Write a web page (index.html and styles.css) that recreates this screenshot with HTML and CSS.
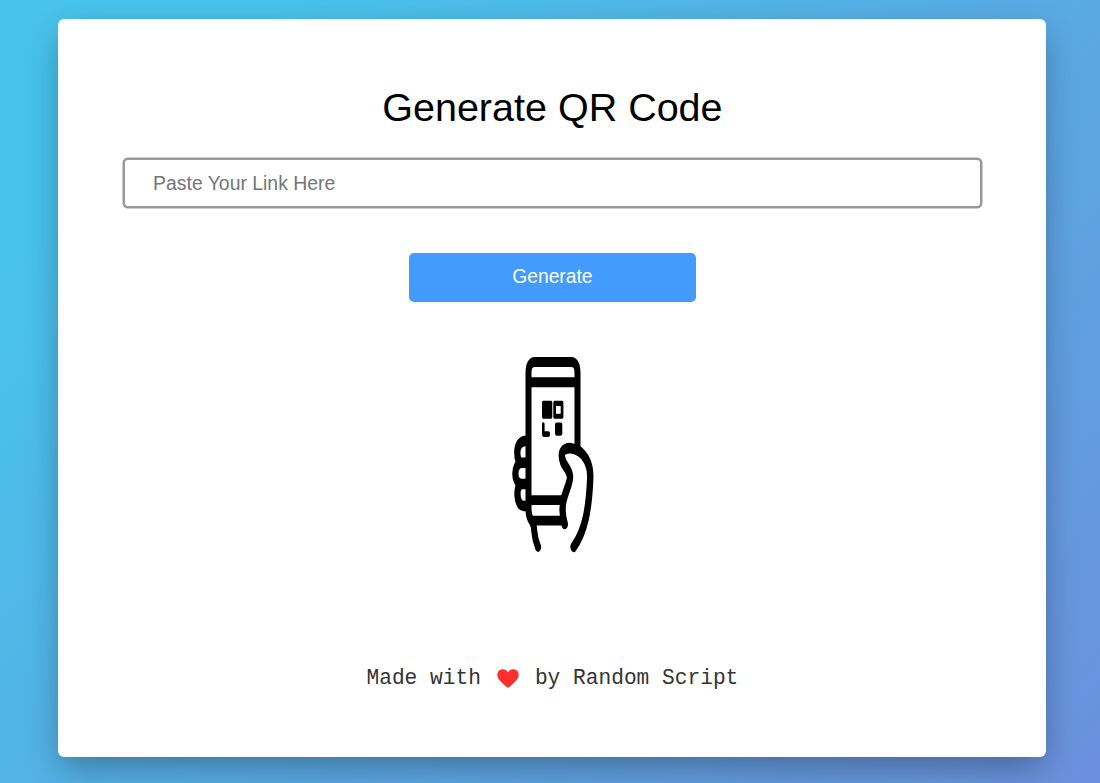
FILE: index.html
```html
<!DOCTYPE html>
<html lang="en">
<head>
<meta charset="utf-8">
<title>QR Code Generator</title>
<link rel="stylesheet" href="styles.css">
</head>
<body>
<main class="card">
  <h1 class="title">Generate QR Code</h1>
  <input class="link-input" type="text" placeholder="Paste Your Link Here">
  <button class="generate" type="button">Generate</button>
  <svg class="phone" viewBox="0 0 100 127.27" preserveAspectRatio="none" aria-hidden="true">
    <g fill="none" stroke="#000" stroke-width="6" stroke-linecap="round" stroke-linejoin="round">
      <path d="M72.5 59V14Q72.5 7.3 66 7.3H30Q23.5 7.3 23.5 14V97Q23.5 101 27 104Q29 106 29.3 110Q30 115 33 119.3"/>
      <path d="M24 19.5H72M25 91H58M28 103.4H58" stroke-linecap="butt"/>
      <path d="M22 55C15 55 12.3 58 12.3 62Q12.3 67.5 16 68.3H22M16 68.3C8.5 70 8.5 80 16 81.2H22M16 81.2C10.5 83 11.5 94.5 18.5 94.5H22" stroke-width="6.3"/>
      <path d="M59.7 105.5C57 100 57 94 59 90C61 85 65.5 80 65 76.5C64 71 56.8 70 56.8 64C56.8 60.5 61 59.2 66 59.5C79 60.5 86 69 85.2 78C84 96 80 110 68.7 119.3" stroke-width="6.4"/>
    </g>
    <rect x="37" y="30.7" width="10.3" height="10.9" rx="1.2"/>
    <path fill-rule="evenodd" d="M49.5 30.7H57.2Q58.4 30.7 58.4 32V40.4Q58.4 41.6 57.2 41.6H49.5Q48.3 41.6 48.3 40.4V32Q48.3 30.7 49.5 30.7ZM51 34V38.6H55.7V34Z"/>
    <path d="M37 44.8Q37 43.8 38.3 43.8Q39.6 43.8 39.6 45V49.3H43.5Q45.1 49.3 45.1 51Q45.1 52.7 43.5 52.7H38.5Q37 52.7 37 51Z"/>
    <rect x="50" y="44" width="7.3" height="8" rx="1.5"/>
  </svg>
  <p class="credit"><span>Made with</span><svg class="heart" viewBox="0 0 22 19" aria-hidden="true"><path d="M11 18.7Q9.5 18.2 4.2 13C1.8 10.7.3 8.6.3 5.8C.3 2.5 2.8.3 5.8.3C8 .3 9.9 1.5 11 3.2C12.1 1.5 14 .3 16.2.3C19.2.3 21.7 2.5 21.7 5.8C21.7 8.6 20.2 10.7 17.8 13Q12.5 18.2 11 18.7Z" fill="#fd302e"/></svg><span>by Random Script</span></p>
</main>
</body>
</html>
```
FILE: styles.css
```css
* {
  box-sizing: border-box;
}

body {
  margin: 0;
  height: 783px;
  padding: 18.6px 53.6px 26.4px 58px;
  overflow: hidden;
  background: linear-gradient(135deg, #48c3eb 15%, #6b90dd 100%);
  font-family: "Liberation Sans", Arial, sans-serif;
}

.card {
  display: flex;
  flex-direction: column;
  align-items: center;
  height: 738px;
  padding: 66px 64.2px 0 64.6px;
  border-radius: 6px;
  background: #fff;
  box-shadow: 0 13px 34px -3px rgba(0, 0, 0, 0.32);
}

.title {
  margin: 0;
  font-size: 39.5px;
  font-weight: 400;
  line-height: 45px;
  color: #000;
}

.link-input {
  width: 100%;
  height: 50px;
  margin-top: 28.5px;
  padding: 0 28.5px;
  border: 2px solid #999;
  border-radius: 5px;
  box-shadow: 0 0 0 0.5px #999;
  font: 19.4px "Liberation Sans", Arial, sans-serif;
}

.link-input::placeholder {
  color: #757575;
}

.generate {
  width: 287px;
  height: 49px;
  margin-top: 44.6px;
  padding: 0;
  border: 0;
  border-radius: 5px;
  background: #439bfe;
  color: #fff;
  font: 19.3px "Liberation Sans", Arial, sans-serif;
}

.phone {
  width: 100px;
  height: 210px;
  margin: 48px 0 0 5px;
}

.credit {
  display: flex;
  align-items: center;
  margin: 104.6px 0 0;
  font: 21.2px/28px "Liberation Mono", "Courier New", monospace;
  color: #333;
}

.heart {
  width: 22px;
  height: 19px;
  margin: 0 16px;
}
```
